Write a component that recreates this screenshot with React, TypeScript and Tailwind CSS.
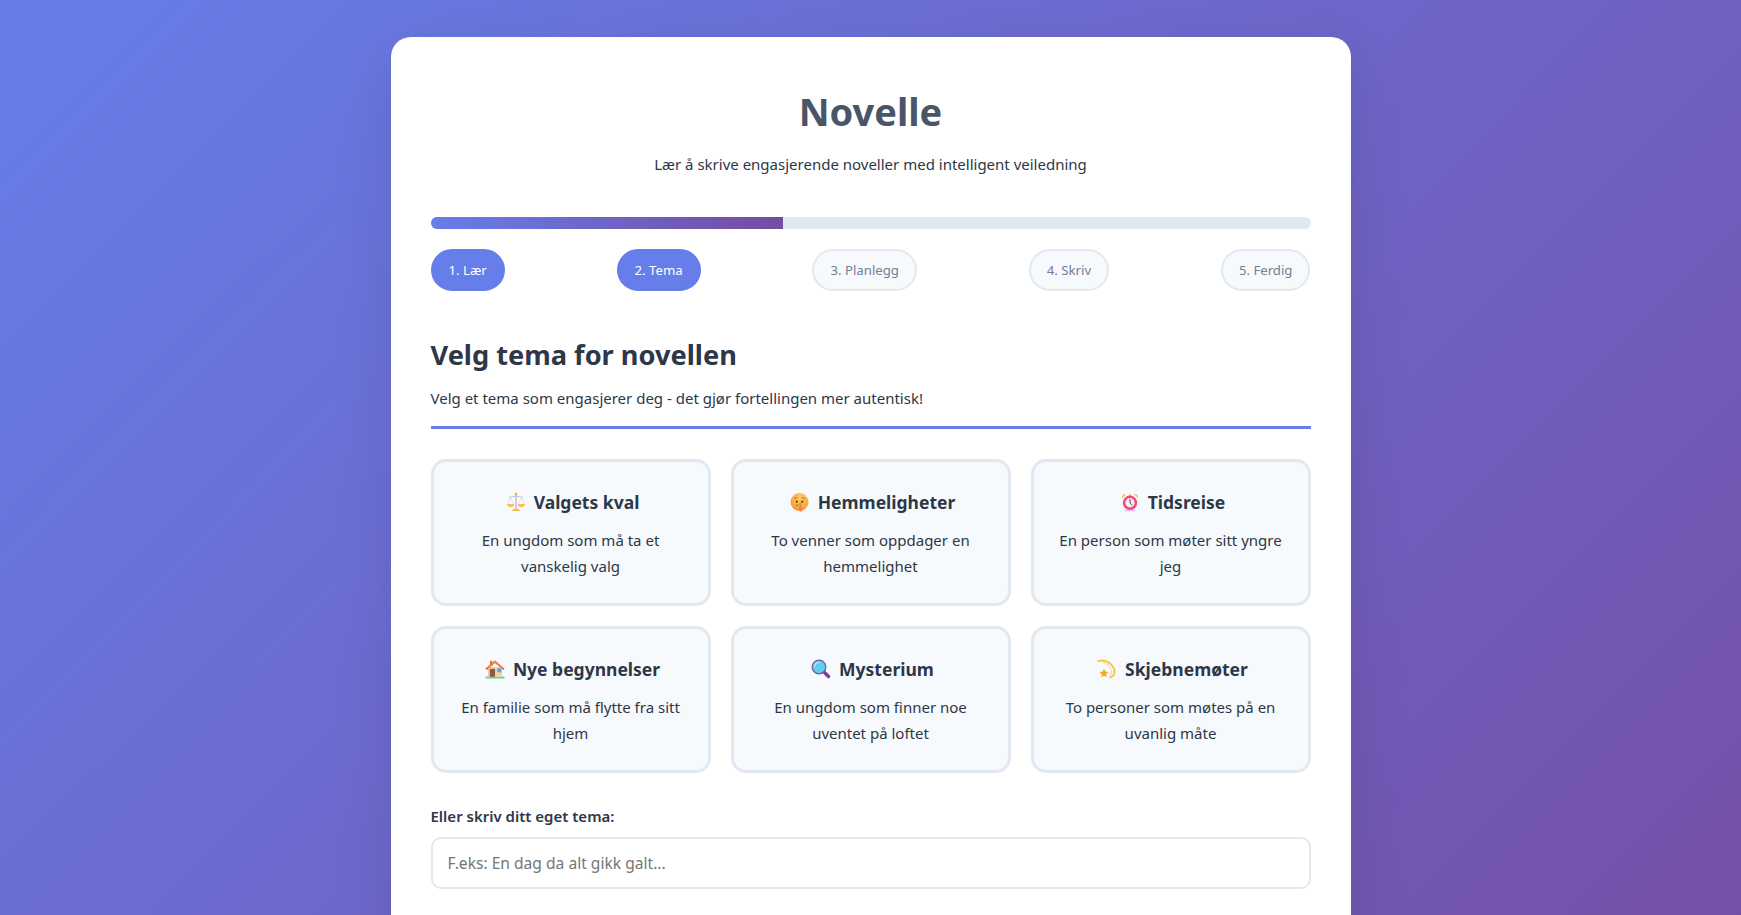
const STEPS = [
  { label: "1. Lær", active: true },
  { label: "2. Tema", active: true },
  { label: "3. Planlegg", active: false },
  { label: "4. Skriv", active: false },
  { label: "5. Ferdig", active: false },
];

function Scales() {
  return (
    <>
      <path d="M10 2.500V17" stroke="#b9b2c9" strokeWidth="1.300" />
      <path d="M3 5.500 10 4l7 1.500" stroke="#c9c2d8" strokeWidth="1.200" fill="none" />
      <path d="M4.600 5.500 1.600 12M4.600 5.500 7.600 12M15.400 5.500 12.400 12M15.400 5.500 18.400 12" stroke="#d8d2e2" strokeWidth="0.600" fill="none" />
      <path d="M.8 12h7.600c-.3 2.200-1.800 3.200-3.800 3.200S1.100 14.200.8 12Z" fill="#fbbf5d" />
      <path d="M11.600 12h7.600c-.3 2.200-1.800 3.200-3.800 3.200s-3.500-1-3.800-3.200Z" fill="#fbbf5d" />
      <circle cx="10" cy="2" r="1.300" fill="#f9a83a" />
      <path d="M6 19c0-1.500 1.800-2.300 4-2.300s4 .8 4 2.300Z" fill="#fbb64a" />
    </>
  );
}

function Shush() {
  return (
    <>
      <defs>
        <radialGradient id="shushFace" cx="0.55" cy="0.3" r="0.8">
          <stop offset="0" stopColor="#ffd25a" />
          <stop offset="0.65" stopColor="#fba63c" />
          <stop offset="1" stopColor="#f47a3a" />
        </radialGradient>
      </defs>
      <circle cx="9.500" cy="10" r="9" fill="url(#shushFace)" />
      <path d="M4.500 6.500 7 5.600M12 5.600l2.500.9" stroke="#a0572c" strokeWidth="0.800" strokeLinecap="round" />
      <circle cx="6.800" cy="9.700" r="1.100" fill="#4a3a36" />
      <circle cx="12.200" cy="9.700" r="1.100" fill="#4a3a36" />
      <ellipse cx="7" cy="13.200" rx="1" ry="0.800" fill="#b4562e" />
      <path d="M9.100 11.500c.2-1 1.900-1 2.100 0l.8 7c.1 1.300-2.400 1.500-2.700 0Z" fill="#f9813f" />
    </>
  );
}

function AlarmClock() {
  return (
    <>
      <path d="M2 6.500C1.600 3.800 3.400 1.600 6 2.100Z" fill="#f8bc45" />
      <path d="M18 6.500c.4-2.700-1.400-4.900-4-4.400Z" fill="#f8bc45" />
      <circle cx="10" cy="3.200" r="0.900" fill="#f9a93f" />
      <path d="M5 17.500h10l1 1.800H4Z" fill="#d9c4ef" />
      <circle cx="10" cy="10.800" r="7.200" fill="#f5477a" />
      <circle cx="10" cy="10.800" r="4.700" fill="#f3eef6" />
      <path d="M10 7.500v3.500l2 2" stroke="#5e4a5a" strokeWidth="1" fill="none" strokeLinecap="round" />
    </>
  );
}

function House() {
  return (
    <>
      <rect x="0.500" y="17.600" width="19" height="1.800" rx="0.400" fill="#5fd88a" />
      <rect x="3" y="8" width="14" height="9.800" fill="#f4cfa6" />
      <rect x="5" y="1.800" width="2.400" height="5" fill="#e8734a" />
      <path d="M.4 9.800 10 1.500l9.600 8.300-1.300 1.200L10 4 1.700 11Z" fill="#f0552f" />
      <path d="M10 2.600 3 8.600v1.200L10 4l7 5.800V8.600Z" fill="#f59a3e" />
      <rect x="4.800" y="9.800" width="5.200" height="8" fill="#8c5a48" />
      <rect x="12.300" y="9.400" width="3.800" height="3.900" fill="#4ba8ea" />
    </>
  );
}

function Magnifier() {
  return (
    <>
      <path d="M12.700 12.700 17.500 17.500" stroke="#7a3f94" strokeWidth="3.400" strokeLinecap="round" />
      <circle cx="8" cy="8" r="6.800" fill="#5cd0ee" stroke="#7c5aa6" strokeWidth="1.300" />
      <path d="M3.600 7.500C4 5 5.800 3.500 8 3.300" stroke="#b8eefa" strokeWidth="1.200" fill="none" strokeLinecap="round" />
    </>
  );
}

function Dizzy() {
  return (
    <>
      <path d="M1 2.200C6.500-.2 14 3 16.800 9.500c1.700 4 .2 8.400-3.800 9" stroke="#f9c23c" strokeWidth="1.800" fill="none" strokeLinecap="round" />
      <path d="M1 2.200C6 1.600 11.500 5 13.800 9.800c1 2.300.8 4.800-.8 8.700" stroke="#fbd15a" strokeWidth="0.900" fill="none" strokeLinecap="round" />
      <path d="m7 9.800 1.400 2.800 3 .4-2.200 2.100.6 3-2.800-1.400-2.700 1.500.5-3-2.200-2.100 3-.5Z" fill="#f9a825" />
    </>
  );
}

const THEMES = [
  { icon: <Scales />, title: "Valgets kval", text: "En ungdom som må ta et vanskelig valg" },
  { icon: <Shush />, title: "Hemmeligheter", text: "To venner som oppdager en hemmelighet" },
  { icon: <AlarmClock />, title: "Tidsreise", text: "En person som møter sitt yngre jeg" },
  { icon: <House />, title: "Nye begynnelser", text: "En familie som må flytte fra sitt hjem" },
  { icon: <Magnifier />, title: "Mysterium", text: "En ungdom som finner noe uventet på loftet" },
  { icon: <Dizzy />, title: "Skjebnemøter", text: "To personer som møtes på en uvanlig måte" },
];

export default function App() {
  return (
    <div className="h-screen overflow-hidden font-['Noto_Sans',sans-serif] text-[#2d3748]">
      <div className="h-[1200px] bg-[linear-gradient(135deg,#667eea_0%,#764ba2_100%)] pt-[37px]">
        <div className="mx-auto h-[1100px] w-[960px] rounded-[20px] bg-white px-10 pt-[42px] shadow-[0_20px_60px_rgba(0,0,0,0.1)]">
          <div className="mb-10 text-center">
            <h1 className="mb-2 text-[38px] leading-[64px] font-bold text-[#4a5568]">Novelle</h1>
            <p className="text-[15px] leading-[26px]">Lær å skrive engasjerende noveller med intelligent veiledning</p>
          </div>

          <div className="mb-5 h-3 overflow-hidden rounded-md bg-[#e2e8f0]">
            <div className="h-full w-[40%] bg-[linear-gradient(90deg,#667eea,#764ba2)]" />
          </div>

          <div className="mb-[41px] flex justify-between">
            {STEPS.map((s) => (
              <div
                key={s.label}
                className={`rounded-[25px] border-2 px-4 py-2 text-[13.2px] leading-[22px] ${
                  s.active
                    ? "border-[#667eea] bg-[#667eea] text-white"
                    : "border-[#e2e8f0] bg-[#f7fafc] text-[#718096]"
                }`}
              >
                {s.label}
              </div>
            ))}
          </div>

          <div className="mb-[30px] border-b-[3px] border-[#667eea] pb-[15px]">
            <h2 className="mb-[7px] text-[27.2px] leading-[46px] font-bold">Velg tema for novellen</h2>
            <p className="text-[15px] leading-[26px]">Velg et tema som engasjerer deg - det gjør fortellingen mer autentisk!</p>
          </div>

          <div className="mb-[30px] grid grid-cols-3 gap-5">
            {THEMES.map((t) => (
              <div key={t.title} className="rounded-[15px] border-[3px] border-[#e2e8f0] bg-[#f7fafc] px-[25px] pt-[26px] pb-6 text-center">
                <h3 className="mb-[11px] flex items-center justify-center gap-2 pl-1 text-[17.5px] leading-[28px] font-bold">
                  <svg viewBox="0 0 20 20" className="h-5 w-5 shrink-0">
                    {t.icon}
                  </svg>
                  {t.title}
                </h3>
                <p className="text-[15px] leading-[26px]">{t.text}</p>
              </div>
            ))}
          </div>

          <label className="mb-2 block text-[15px] leading-[26px] font-semibold">Eller skriv ditt eget tema:</label>
          <input
            placeholder="F.eks: En dag da alt gikk galt..."
            className="h-[52px] w-full rounded-[10px] border-2 border-[#e2e8f0] px-[15px] text-[15.6px] placeholder:text-[#757575]"
          />
        </div>
      </div>
    </div>
  );
}
